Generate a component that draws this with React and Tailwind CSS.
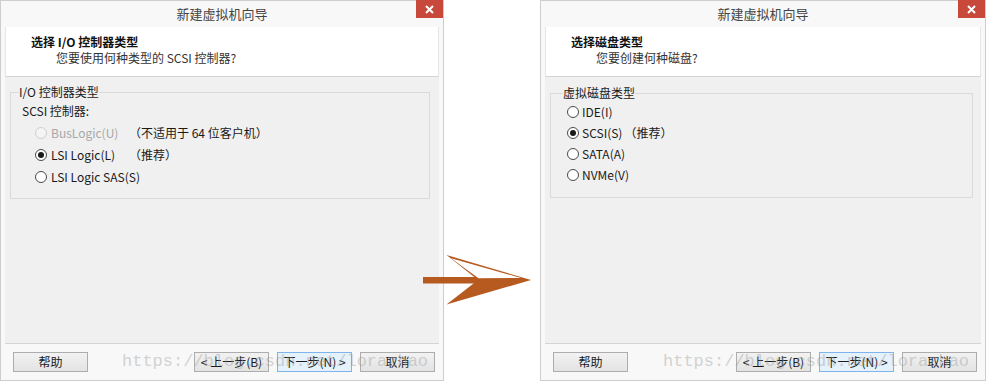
import React from 'react';

const Radio = ({ checked, disabled }) => (
  <span
    className={`w-[12px] h-[12px] rounded-full border flex items-center justify-center shrink-0 ${
      disabled ? 'border-[#cfcfcf] bg-[#f4f4f4]' : 'border-[#4a4a4a] bg-white'
    }`}
  >
    {checked && <span className="w-[6px] h-[6px] rounded-full bg-[#1a1a1a]" />}
  </span>
);

const Button = ({ children, primary }) => (
  <div
    className={`w-[75px] h-[20px] flex items-center justify-center text-[12px] border ${
      primary
        ? 'border-[#7eb4ea] bg-[#e5f1fb]'
        : 'border-[#adadad] bg-gradient-to-b from-[#f2f2f2] to-[#e3e3e3]'
    }`}
  >
    {children}
  </div>
);

const Dialog = ({ width, heading, question, headPad, askPad, children }) => (
  <div className={`${width} h-[381px] shrink-0 border border-[#cdcdcd] bg-[#f8f8f8] flex flex-col`}>
    {/* Title bar */}
    <div className="relative h-[26px] flex items-center justify-center text-[13px] text-[#444]">
      新建虚拟机向导
      <div className="absolute right-0 -top-px w-[27px] h-[18px] bg-[#c8493c] flex items-center justify-center">
        <svg width="9" height="9" viewBox="0 0 9 9">
          <path d="M1 1L8 8M8 1L1 8" stroke="#fff" strokeWidth="2" />
        </svg>
      </div>
    </div>

    {/* Header */}
    <div className="mx-[4px] h-[50px] bg-white border-x border-[#e6e6e6] border-b border-b-[#d4d4d4] pt-[7px] shrink-0">
      <p className={`${headPad} text-[12px] leading-[16px] font-bold text-[#111]`}>{heading}</p>
      <p className={`${askPad} text-[12px] leading-[16px] text-[#333]`}>{question}</p>
    </div>

    {/* Content */}
    <div className="mx-[4px] flex-1 bg-[#f0f0f0]">{children}</div>

    {/* Footer */}
    <div className="mx-[4px] h-[37px] border-t border-[#d4d4d4] flex items-center pl-[8px] pr-[4px] shrink-0 text-[#1a1a1a]">
      <Button>帮助</Button>
      <div className="flex-1" />
      <div className="flex gap-[8px]">
        <Button>&lt; 上一步(B)</Button>
        <Button primary>下一步(N) &gt;</Button>
        <Button>取消</Button>
      </div>
    </div>
  </div>
);

const Arrow = () => (
  <svg
    className="absolute left-[420px] top-[250px]"
    width="115"
    height="58"
    viewBox="420 250 115 58"
  >
    <rect x="423" y="277" width="56" height="6.5" fill="#b65a20" />
    <polygon points="446.5,255 531,280 446.5,304.5 478,280" fill="#b65a20" />
    <polygon points="451,258.3 521,278 478.5,278.3" fill="#ffffff" />
  </svg>
);

export default function App() {
  return (
    <div className="relative w-[986px] h-[383px] bg-white flex font-['Noto_Sans_CJK_SC',sans-serif] text-[#1a1a1a] overflow-hidden">
      <Dialog
        width="w-[444px]"
        heading="选择 I/O 控制器类型"
        question="您要使用何种类型的 SCSI 控制器?"
        headPad="pl-[25px]"
        askPad="pl-[50px]"
      >
        <fieldset className="mt-[7px] ml-[5px] mr-[9px] border border-[#dadada] px-[8px] pb-[10px]">
          <legend className="text-[12px] leading-[16px] px-0">I/O 控制器类型</legend>
          <div className="h-[22px] flex items-center pl-[3px] text-[12px]">SCSI 控制器:</div>
          <div className="h-[22px] flex items-center pl-[16px] text-[12px]">
            <Radio disabled />
            <span className="ml-[4px] w-[78px] text-[#a8a8a8]">BusLogic(U)</span>
            <span>（不适用于 64 位客户机）</span>
          </div>
          <div className="h-[22px] flex items-center pl-[16px] text-[12px]">
            <Radio checked />
            <span className="ml-[4px] w-[78px]">LSI Logic(L)</span>
            <span>（推荐）</span>
          </div>
          <div className="h-[22px] flex items-center pl-[16px] text-[12px]">
            <Radio />
            <span className="ml-[4px]">LSI Logic SAS(S)</span>
          </div>
        </fieldset>
      </Dialog>

      <div className="w-[96px] shrink-0" />

      <Dialog
        width="w-[446px]"
        heading="选择磁盘类型"
        question="您要创建何种磁盘?"
        headPad="pl-[25px]"
        askPad="pl-[50px]"
      >
        <fieldset className="mt-[8px] ml-[5px] mr-[8px] border border-[#dadada] px-[12px] pb-[12px]">
          <legend className="text-[12px] leading-[16px] px-0">虚拟磁盘类型</legend>
          <div className="h-[21px] flex items-center pl-[4px] text-[12px]">
            <Radio />
            <span className="ml-[3px]">IDE(I)</span>
          </div>
          <div className="h-[21px] flex items-center pl-[4px] text-[12px]">
            <Radio checked />
            <span className="ml-[3px]">SCSI(S)</span>
            <span className="ml-[2px]">（推荐）</span>
          </div>
          <div className="h-[21px] flex items-center pl-[4px] text-[12px]">
            <Radio />
            <span className="ml-[3px]">SATA(A)</span>
          </div>
          <div className="h-[21px] flex items-center pl-[4px] text-[12px]">
            <Radio />
            <span className="ml-[3px]">NVMe(V)</span>
          </div>
        </fieldset>
      </Dialog>

      <Arrow />

      {/* Watermarks */}
      <div className="absolute left-[122px] top-[351px] font-['Liberation_Mono',monospace] text-[17px] leading-[22px] text-[#9a9a9a] opacity-40 pointer-events-none whitespace-nowrap">
        https://blog.csdn.net/lorazhao
      </div>
      <div className="absolute left-[663px] top-[351px] font-['Liberation_Mono',monospace] text-[17px] leading-[22px] text-[#9a9a9a] opacity-40 pointer-events-none whitespace-nowrap">
        https://blog.csdn.net/lorazhao
      </div>
    </div>
  );
}
